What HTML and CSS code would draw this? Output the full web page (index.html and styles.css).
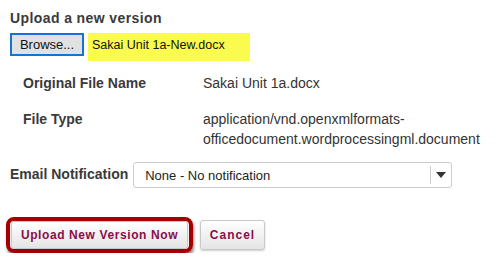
FILE: index.html
```html
<!DOCTYPE html>
<html>
<head>
    <meta charset="utf-8" />
    <title>Upload a new version</title>
    <link rel="stylesheet" href="styles.css">
</head>

<body>
    <div class="main-box">
        <h4 class="title">Upload a new version</h4>

        <div class="file-row">
            <button class="browse">Browse...</button>
            <span class="file-name">Sakai Unit 1a-New.docx</span>
        </div>

        <div class="details">
            <div class="label">Original File Name</div>
            <div class="value">Sakai Unit 1a.docx</div>

            <div class="label">File Type</div>
            <div class="value">application/vnd.openxmlformats-<br />officedocument.wordprocessingml.document</div>
        </div>

        <div class="notify-row">
            <label class="label">Email Notification</label>
            <div class="select-box">
                <span class="select-text">None - No notification</span>
                <span class="select-arrow"></span>
            </div>
        </div>

        <div class="act-row">
            <div class="highlight">
                <button class="act-btn upload">Upload New Version Now</button>
            </div>
            <button class="act-btn cancel">Cancel</button>
        </div>
    </div>
</body>
</html>
```

FILE: styles.css
```css
* {
    margin: 0px;
    padding: 0px;
    box-sizing: border-box;
}

body {
    background-color: #fff;
    font-family: "Liberation Sans", Arial, sans-serif;
    font-size: 14px;
    color: #333;
}

.main-box {
    padding: 10px 10px 0px 10px;
}

.title {
    font-size: 14px;
    line-height: 17px;
    letter-spacing: 0.4px;
    font-weight: bold;
    color: #3a3a3a;
}

.file-row {
    margin-top: 6px;
    display: flex;
    align-items: flex-start;
    gap: 4px;
}

.browse {
    width: 74px;
    height: 23px;
    border: 2px solid #1673d6;
    background-color: #e1e1e1;
    font-family: "Liberation Sans", Arial, sans-serif;
    font-size: 13px;
    color: #111;
}

.file-name {
    width: 162px;
    height: 28px;
    padding: 5px 0px 0px 4px;
    background-color: #fbfb4f;
    font-size: 12.5px;
    color: #111;
}

.details {
    margin: 12px 0px 0px 13px;
    display: grid;
    grid-template-columns: 180px auto;
    row-gap: 16px;
    line-height: 20px;
}

.label {
    font-weight: bold;
    color: #3a3a3a;
}

.value {
    color: #333;
}

.notify-row {
    margin-top: 13px;
    display: flex;
    align-items: center;
    gap: 5px;
}

.notify-row .label {
    margin-top: -3px;
}

.select-box {
    width: 319px;
    height: 26px;
    border: 1px solid #ccc;
    border-radius: 3px;
    display: flex;
    align-items: center;
    justify-content: space-between;
    padding-left: 11px;
    font-size: 13px;
}

.select-text {
    color: #222;
}

.select-arrow {
    width: 21px;
    height: 18px;
    border-left: 1px solid #ccc;
    display: flex;
    align-items: center;
    justify-content: center;
}

.select-arrow::after {
    content: "";
    border-left: 5px solid transparent;
    border-right: 5px solid transparent;
    border-top: 6px solid #333;
}

.act-row {
    margin: 29px 0px 0px -4px;
    display: flex;
    align-items: center;
    gap: 7px;
}

.highlight {
    border: 4px solid #a50000;
    border-radius: 8px;
    box-shadow: 1px 3px 3px rgba(0, 0, 0, 0.45);
    padding: 0px 1px;
}

.act-btn {
    height: 28px;
    border: 1px solid #c8c8c8;
    border-radius: 3px;
    background: linear-gradient(#ffffff, #e4e4e4);
    box-shadow: 0px 1px 2px rgba(0, 0, 0, 0.2);
    font-family: "Liberation Sans", Arial, sans-serif;
    font-size: 12px;
    font-weight: bold;
    letter-spacing: 0.6px;
    color: #8a0d47;
}

.upload {
    width: 177px;
    height: 28px;
}

.cancel {
    width: 65px;
    height: 30px;
    letter-spacing: 1px;
}
```
